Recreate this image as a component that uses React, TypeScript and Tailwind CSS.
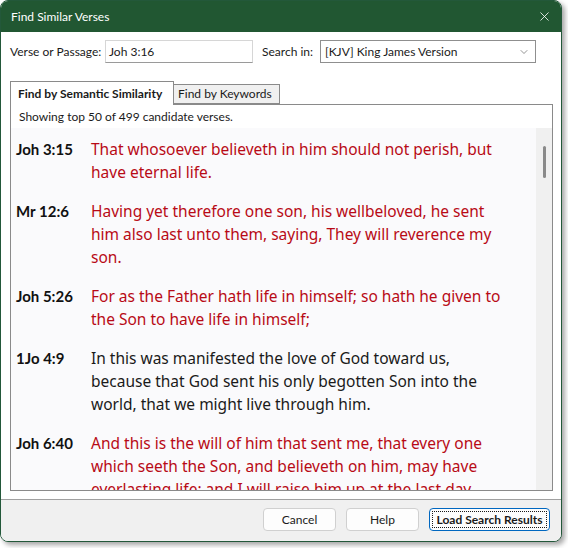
import { ChevronDown, X } from 'lucide-react';

type Verse = {
  ref: string;
  lines: string[];
  red: boolean;
};

const verses: Verse[] = [
  {
    ref: 'Joh 3:15',
    lines: ['That whosoever believeth in him should not perish, but', 'have eternal life.'],
    red: true,
  },
  {
    ref: 'Mr 12:6',
    lines: [
      'Having yet therefore one son, his wellbeloved, he sent',
      'him also last unto them, saying, They will reverence my',
      'son.',
    ],
    red: true,
  },
  {
    ref: 'Joh 5:26',
    lines: ['For as the Father hath life in himself; so hath he given to', 'the Son to have life in himself;'],
    red: true,
  },
  {
    ref: '1Jo 4:9',
    lines: [
      'In this was manifested the love of God toward us,',
      'because that God sent his only begotten Son into the',
      'world, that we might live through him.',
    ],
    red: false,
  },
  {
    ref: 'Joh 6:40',
    lines: [
      'And this is the will of him that sent me, that every one',
      'which seeth the Son, and believeth on him, may have',
      'everlasting life: and I will raise him up at the last day.',
    ],
    red: true,
  },
];

const ui = "font-['Lato','Noto_Sans',sans-serif]";

const FooterButton = ({ label, primary }: { label: string; primary?: boolean }) => (
  <button
    className={
      primary
        ? 'h-[23px] w-[121px] rounded-[4px] border border-[#0067c0] bg-[#fdfdfd] p-[2px] text-[12px] font-bold text-[#1a1a1a]'
        : 'h-[23px] w-[73px] rounded-[4px] border border-[#d0d0d0] bg-[#fdfdfd] text-[12px] text-[#1a1a1a]'
    }
  >
    {primary ? (
      <span className="flex h-full w-full items-center justify-center border border-dotted border-[#1a1a1a]">
        {label}
      </span>
    ) : (
      label
    )}
  </button>
);

const App = () => {
  return (
    <div className={`min-h-screen bg-white ${ui}`}>
      <div className="flex h-[542px] w-[562px] flex-col overflow-hidden rounded-[8px] border border-[#23583a] bg-white shadow-[3px_3px_5px_rgba(0,0,0,0.35)]">
        {/* title bar */}
        <div className="flex h-[31px] shrink-0 items-center justify-between bg-[#215732] pl-[10px] pr-[9px] text-[12px] text-white">
          <span>Find Similar Verses</span>
          <X className="h-[15px] w-[15px]" strokeWidth={1.3} />
        </div>

        {/* body */}
        <div className="flex flex-1 flex-col px-[9px] pt-[8px] text-[12px] text-[#1a1a1a]">
          <div className="flex h-[23px] items-center">
            <span className="w-[95px]">Verse or Passage:</span>
            <div className="flex h-[23px] w-[148px] items-center border border-[#d6d6d6] border-b-[#9a9a9a] px-[3px]">
              Joh 3:16
            </div>
            <span className="ml-[9px] w-[58px]">Search in:</span>
            <div className="flex h-[23px] w-[216px] items-center justify-between border border-[#8f8f8f] pl-[4px] pr-[5px]">
              <span>[KJV] King James Version</span>
              <ChevronDown className="h-[12px] w-[12px] text-[#5a5a5a]" strokeWidth={1.3} />
            </div>
          </div>

          {/* tabs */}
          <div className="mt-[18px] flex items-end">
            <div className="relative z-10 -mb-px flex h-[24px] w-[164px] items-center border border-b-0 border-[#8a8a8a] bg-white pl-[7px] font-bold">
              Find by Semantic Similarity
            </div>
            <div className="flex h-[20px] w-[106px] items-center border border-l-0 border-[#8a8a8a] bg-[#f0f0f0] pl-[4px]">
              Find by Keywords
            </div>
          </div>

          <div className="flex h-[387px] w-[543px] flex-col border border-[#8a8a8a]">
            <div className="flex h-[23px] shrink-0 items-center pl-[8px]">Showing top 50 of 499 candidate verses.</div>
            <div className="flex min-h-0 flex-1 bg-[#fafafc]">
              <div className="min-w-0 flex-1 overflow-hidden pt-[2px] leading-[23px]">
                {verses.map((v) => (
                  <div key={v.ref} className="flex py-[8px] pl-[5px]">
                    <div className="w-[75px] shrink-0 font-['Lato',sans-serif] text-[15px] font-bold text-[#111]">
                      {v.ref}
                    </div>
                    <div
                      className={`font-['Noto_Sans','Open_Sans',sans-serif] text-[15.5px] ${
                        v.red ? 'text-[#b80a16]' : 'text-[#1a1a1a]'
                      }`}
                    >
                      {v.lines.map((l) => (
                        <div key={l} className="whitespace-nowrap">
                          {l}
                        </div>
                      ))}
                    </div>
                  </div>
                ))}
              </div>
              <div className="flex w-[16px] shrink-0 justify-center bg-[#f0f0f0] pt-[18px]">
                <div className="h-[32px] w-[3px] rounded-full bg-[#8a8a8a]" />
              </div>
            </div>
          </div>
        </div>

        {/* footer */}
        <div className="mt-[8px] flex h-[42px] shrink-0 items-center justify-end gap-[10px] border-t border-[#a0a0a0] bg-[#f0f0f0] pb-[2px] pr-[11px]">
          <FooterButton label="Cancel" />
          <FooterButton label="Help" />
          <FooterButton label="Load Search Results" primary />
        </div>
      </div>
    </div>
  );
};

export default App;
